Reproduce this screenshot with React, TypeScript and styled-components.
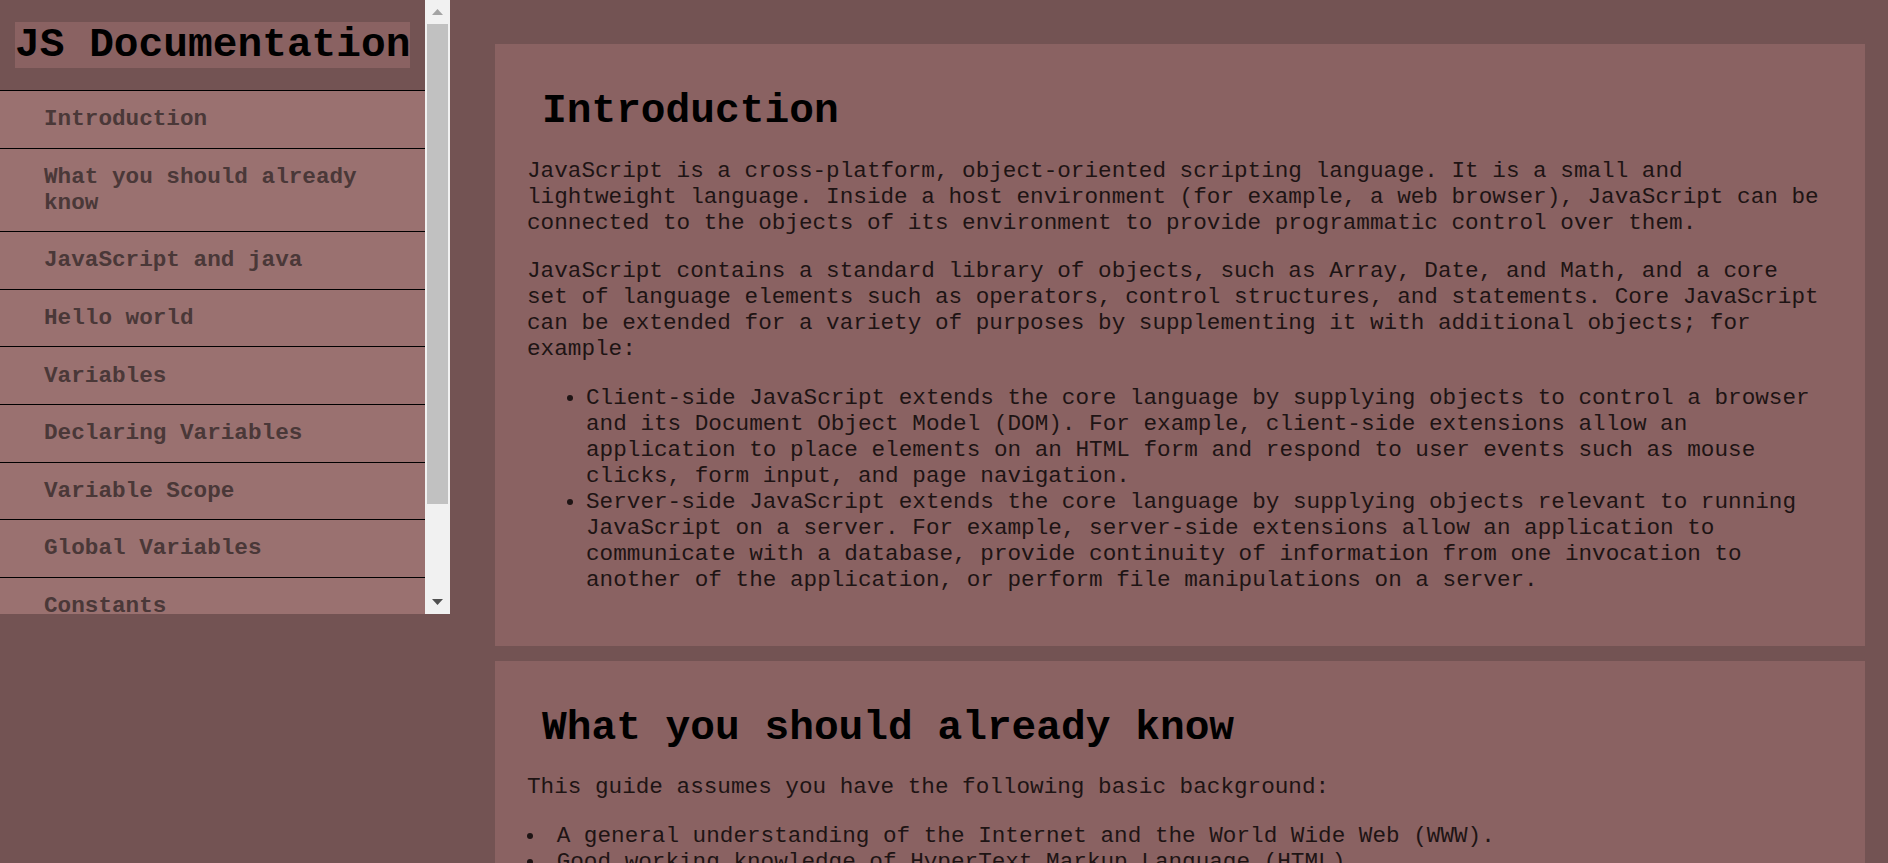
import React from 'react';
import styled, { createGlobalStyle } from 'styled-components';

type Section = {
    title: string;
    body: React.ReactNode;
}

const GlobalStyle = createGlobalStyle`
    html, body {
        margin: 0;
        padding: 0;
        overflow: hidden;
        background: #735353;
        font-family: "Liberation Mono", "Courier New", monospace;
    }
`

const Page = styled.div`
    display: flex;
    align-items: flex-start;
    width: 100%;
`

const Sidebar = styled.nav`
    width: 450px;
    height: 614px;
    flex-shrink: 0;
    display: flex;
    background: #735353;
`

const SideScroll = styled.div`
    flex: 1;
    overflow-y: auto;
    scrollbar-width: none;
`

const ScrollBar = styled.div`
    width: 25px;
    flex-shrink: 0;
    display: flex;
    flex-direction: column;
    background: #f1f1f1;
`

const ScrollButton = styled.div`
    height: 24px;
    display: grid;
    place-items: center;
`

const ScrollTrack = styled.div`
    flex: 1;
    padding: 0 2px;
`

const ScrollThumb = styled.div`
    height: 480px;
    background: #c1c1c1;
`

const SideHeader = styled.header`
    display: flex;
    padding: 22px 0 22px 15px;
`

const SideTitle = styled.h1`
    margin: 0;
    font-size: 41.2px;
    line-height: 46px;
    font-weight: bold;
    color: #000;
    background: #8a6262;
`

const NavList = styled.div`
    display: flex;
    flex-direction: column;
    padding-bottom: 32px;
`

const NavLink = styled.a`
    display: block;
    padding: 15.3px 20px 15.3px 44px;
    border-top: 1.5px solid #000;
    background: #9a7170;
    color: #4a3838;
    font-size: 22.67px;
    line-height: 26px;
    font-weight: bold;
    text-decoration: none;
`

const Main = styled.main`
    flex: 1;
    display: flex;
    flex-direction: column;
    gap: 15px;
    padding: 44px 23px 0 45px;
`

const Card = styled.section`
    background: #8a6262;
    padding: 44px 40px 30px 32px;
    color: #1e1414;
    font-size: 22.67px;
    line-height: 26px;
`

const CardTitle = styled.h1`
    margin: 0 0 0 15px;
    font-size: 41.2px;
    line-height: 47px;
    font-weight: bold;
    color: #000;
`

const Para = styled.p`
    margin: 22.67px 0;
`

const List = styled.ul<{$inside?: boolean}>`
    margin: 22.67px 0;
    padding-left: ${({$inside}) => ($inside ? '0' : '59px')};
    list-style-position: ${({$inside}) => ($inside ? 'inside' : 'outside')};
`

const navItems = [
    'Introduction',
    'What you should already know',
    'JavaScript and java',
    'Hello world',
    'Variables',
    'Declaring Variables',
    'Variable Scope',
    'Global Variables',
    'Constants',
    'Data Types',
];

const sections: Section[] = [
    {
        title: 'Introduction',
        body: (
            <>
                <Para>
                    JavaScript is a cross-platform, object-oriented scripting language. It is a small and
                    lightweight language. Inside a host environment (for example, a web browser), JavaScript
                    can be connected to the objects of its environment to provide programmatic control over them.
                </Para>
                <Para>
                    JavaScript contains a standard library of objects, such as Array, Date, and Math, and a
                    core set of language elements such as operators, control structures, and statements. Core
                    JavaScript can be extended for a variety of purposes by supplementing it with additional
                    objects; for example:
                </Para>
                <List>
                    <li>
                        Client-side JavaScript extends the core language by supplying objects to control a
                        browser and its Document Object Model (DOM). For example, client-side extensions allow
                        an application to place elements on an HTML form and respond to user events such as
                        mouse clicks, form input, and page navigation.
                    </li>
                    <li>
                        Server-side JavaScript extends the core language by supplying objects relevant to
                        running JavaScript on a server. For example, server-side extensions allow an
                        application to communicate with a database, provide continuity of information from
                        one invocation to another of the application, or perform file manipulations on a server.
                    </li>
                </List>
            </>
        ),
    },
    {
        title: 'What you should already know',
        body: (
            <>
                <Para>This guide assumes you have the following basic background:</Para>
                <List $inside>
                    <li>A general understanding of the Internet and the World Wide Web (WWW).</li>
                    <li>Good working knowledge of HyperText Markup Language (HTML).</li>
                    <li>
                        Some programming experience. If you are new to programming, try one of the tutorials
                        linked on the main page about JavaScript.
                    </li>
                </List>
            </>
        ),
    },
];

function Arrow({down, color}: {down?: boolean; color: string}) {
    return (
        <svg width="11" height="6" viewBox="0 0 11 6">
            <polygon points={down ? '0,0 5.5,6 11,0' : '0,6 5.5,0 11,6'} fill={color} />
        </svg>
    );
}

export default function App() {
    return (
        <>
            <GlobalStyle />
            <Page>
                <Sidebar id="navbar">
                    <SideScroll>
                        <SideHeader>
                            <SideTitle>JS Documentation</SideTitle>
                        </SideHeader>
                        <NavList>
                            {navItems.map((item) => (
                                <NavLink key={item} href={`#${item.replace(/ /g, '_')}`}>
                                    {item}
                                </NavLink>
                            ))}
                        </NavList>
                    </SideScroll>
                    <ScrollBar>
                        <ScrollButton>
                            <Arrow color="#a3a3a3" />
                        </ScrollButton>
                        <ScrollTrack>
                            <ScrollThumb />
                        </ScrollTrack>
                        <ScrollButton>
                            <Arrow down color="#505050" />
                        </ScrollButton>
                    </ScrollBar>
                </Sidebar>
                <Main id="main-doc">
                    {sections.map((s) => (
                        <Card key={s.title} id={s.title.replace(/ /g, '_')}>
                            <CardTitle>{s.title}</CardTitle>
                            {s.body}
                        </Card>
                    ))}
                </Main>
            </Page>
        </>
    );
}
